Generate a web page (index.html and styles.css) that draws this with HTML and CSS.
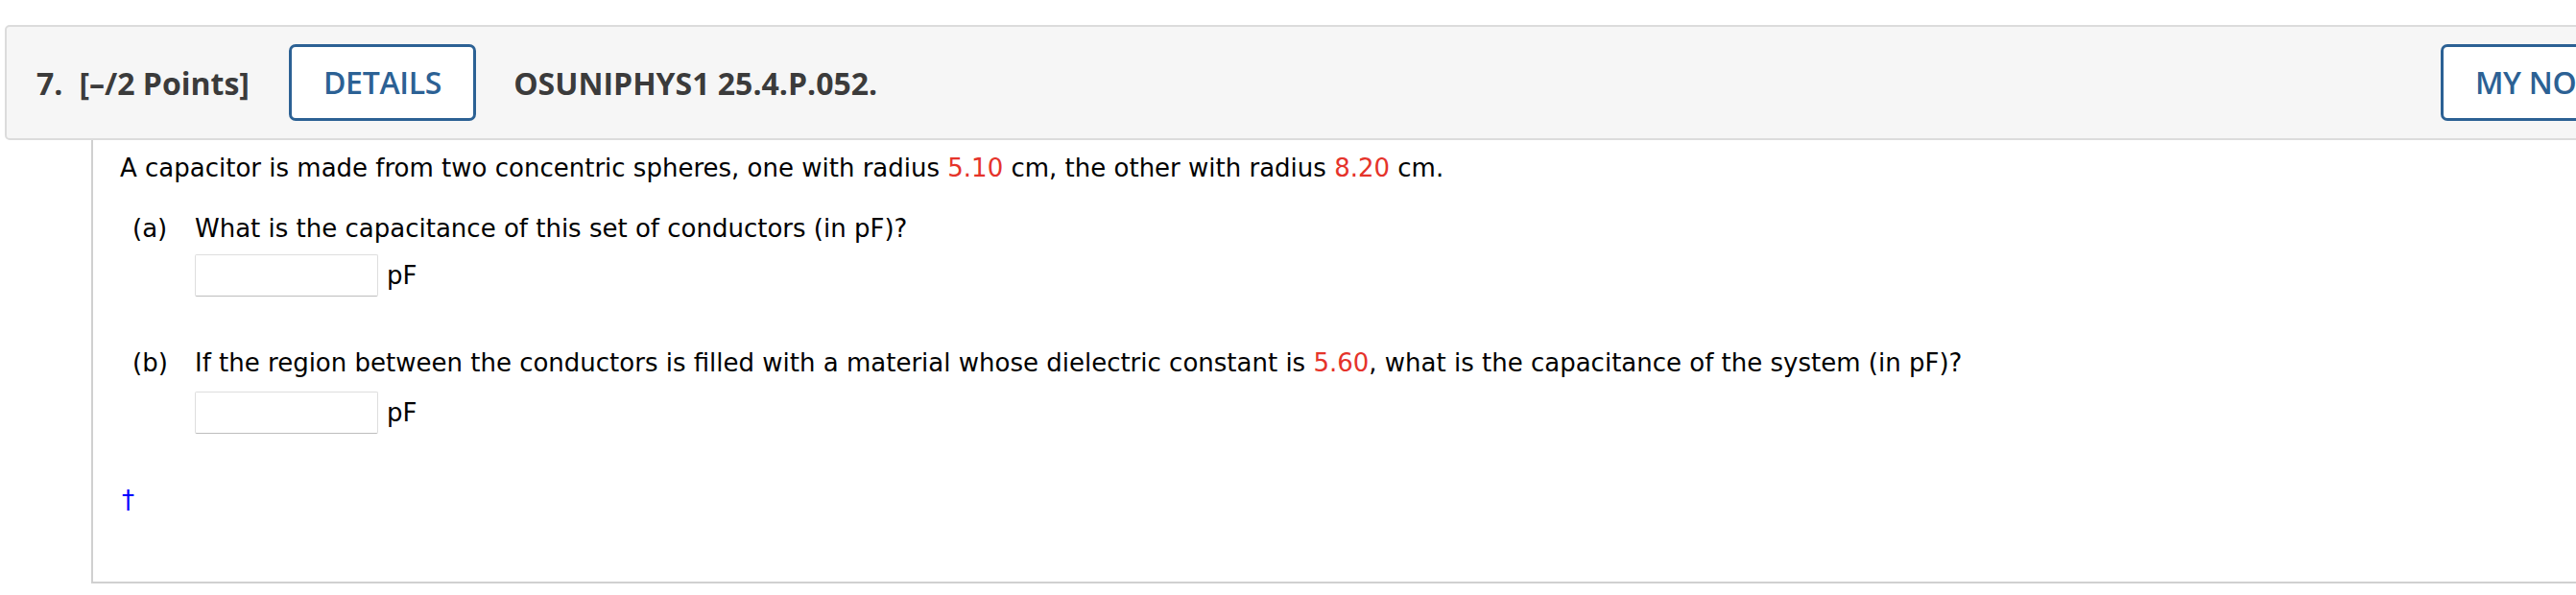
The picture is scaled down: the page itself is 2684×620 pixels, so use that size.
FILE: index.html
```html
<!DOCTYPE html>
<html lang="en">
<head>
<meta charset="utf-8">
<title>Question 7</title>
<link rel="stylesheet" href="styles.css">
</head>
<body>
<div class="question">
  <div class="qhead">
    <span class="qnum">7.</span>
    <span class="qpts">[&ndash;/2 Points]</span>
    <button class="btn btn-details" type="button">DETAILS</button>
    <span class="qcode">OSUNIPHYS1 25.4.P.052.</span>
    <button class="btn btn-notes" type="button">MY NOTES</button>
  </div>
  <div class="qbody">
    <p class="stem">A capacitor is made from two concentric spheres, one with radius <span class="num">5.10</span> cm, the other with radius <span class="num">8.20</span> cm.</p>
    <div class="part part-a">
      <span class="plabel">(a)</span>
      <div class="pmain">
        <div class="ptext">What is the capacitance of this set of conductors (in pF)?</div>
        <div class="answer answer-a"><span class="input"></span><span class="unit">pF</span></div>
      </div>
    </div>
    <div class="part part-b">
      <span class="plabel">(b)</span>
      <div class="pmain">
        <div class="ptext">If the region between the conductors is filled with a material whose dielectric constant is <span class="num">5.60</span>, what is the capacitance of the system (in pF)?</div>
        <div class="answer answer-b"><span class="input"></span><span class="unit">pF</span></div>
      </div>
    </div>
    <div class="dagger">&dagger;</div>
  </div>
</div>
</body>
</html>
```
FILE: styles.css
```css
html, body {
  margin: 0;
  padding: 0;
  background: #ffffff;
  overflow: hidden;
}

body {
  width: 2684px;
  height: 620px;
}

.question {
  margin: 26px 0 0 5px;
  width: 2800px;
}

.qhead {
  box-sizing: border-box;
  height: 120px;
  display: flex;
  align-items: center;
  padding: 0 30px 0 31px;
  background: #f6f6f6;
  border: 2px solid #dcdcdc;
  border-radius: 5px;
  font-family: "Open Sans", "Liberation Sans", sans-serif;
  font-size: 32px;
  font-weight: 700;
  color: #3b3b3b;
}

.qnum {
  margin-right: 17px;
}

.qpts {
  margin-right: 41px;
}

.btn {
  box-sizing: border-box;
  height: 80px;
  padding: 0 33px;
  background: #ffffff;
  border: 3px solid #2c6194;
  border-radius: 7px;
  font-family: "Open Sans", "Liberation Sans", sans-serif;
  font-size: 32px;
  font-weight: 600;
  color: #2c6194;
  line-height: 1;
  letter-spacing: -0.3px;
}

.btn-details {
  margin-right: 39px;
}

.btn-notes {
  margin-left: auto;
}

.qbody {
  margin-left: 90px;
  padding: 11px 0 67px 28px;
  border-left: 2px solid #d0d0d0;
  border-bottom: 2px solid #d0d0d0;
  font-family: Verdana, "DejaVu Sans", sans-serif;
  font-size: 26px;
  line-height: 36px;
  color: #000000;
}

.stem {
  margin: 0;
}

.num {
  color: #e5332a;
}

.part {
  display: flex;
  padding-left: 13px;
}

.part-a {
  margin-top: 27px;
}

.part-b {
  margin-top: 51px;
}

.plabel {
  width: 65px;
  flex: none;
}

.answer {
  display: flex;
  align-items: center;
}

.answer-a {
  margin-top: 9px;
}

.answer-b {
  margin-top: 12px;
}

.input {
  box-sizing: border-box;
  width: 191px;
  height: 44px;
  background: #ffffff;
  border: 1px solid #dedede;
  border-bottom-color: #bdbdbd;
  border-radius: 2px;
}

.unit {
  margin-left: 9px;
}

.dagger {
  margin-top: 51px;
  padding-left: 2px;
  color: #0000ff;
}
```
